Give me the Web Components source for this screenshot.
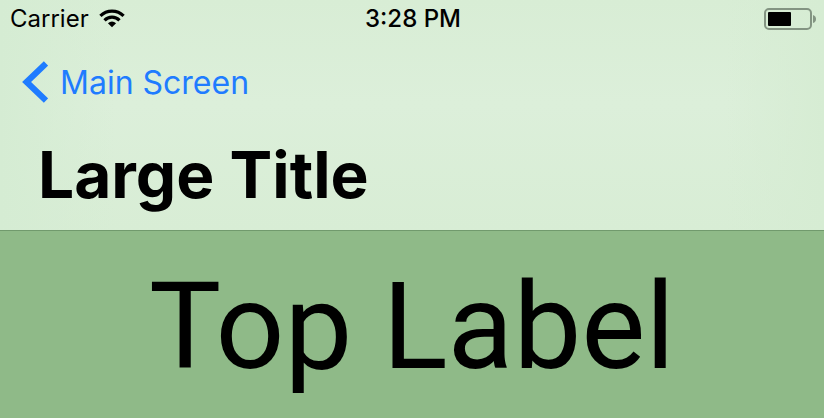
<!DOCTYPE html>
<html lang="en">
<head>
<meta charset="utf-8">
<meta name="viewport" content="width=device-width, initial-scale=1">
<title>Large Title</title>
<style>
  body {
    margin: 0;
    min-height: 100vh;
    display: flex;
    flex-direction: column;
    background: #8fba88;
    color: #000;
    font-family: Inter, "Liberation Sans", sans-serif;
  }
</style>
</head>
<body>
  <large-title-bar>
    <status-bar slot="status" level="50">
      <span slot="carrier">Carrier</span>
      <time slot="time" datetime="15:28">3:28 PM</time>
    </status-bar>
    <back-link slot="back" href="#main">Main Screen</back-link>
    Large Title
  </large-title-bar>
  <top-label>Top Label</top-label>

<script>
/**
 * Creates the open shadow root of a component
 * @param {HTMLElement} element
 * @param {string} html
 * @returns {ShadowRoot}
 */
function attachTemplate(element, html) {
  const root = element.attachShadow({ mode: "open" });
  root.innerHTML = html;
  return root;
}

customElements.define(
  "wifi-icon",
  class extends HTMLElement {
    constructor() {
      super();
      attachTemplate(this, /*html*/ `
        <style>
          :host { display: block; }
          svg { display: block; }
        </style>
        <svg width="26" height="20" viewBox="0 0 26 20" aria-hidden="true">
          <g fill="none" stroke="currentColor" stroke-width="3.2">
            <path d="M1.4 6.9A16.5 16.5 0 0 1 24.6 6.9"/>
            <path d="M5.5 11.3A10.6 10.6 0 0 1 20.5 11.3"/>
          </g>
          <path fill="currentColor" d="M13 18.2L8.9 14.2Q13 10.8 17.1 14.2Z"/>
        </svg>
      `);
    }
  }
);

customElements.define(
  "battery-icon",
  class extends HTMLElement {
    static observedAttributes = ["level"];

    constructor() {
      super();
      this.root = attachTemplate(this, /*html*/ `
        <style>
          :host { display: block; }
          svg { display: block; }
        </style>
        <svg width="52" height="22" viewBox="0 0 52 22" aria-hidden="true">
          <rect x="1" y="1" width="46" height="20" rx="4" fill="none" stroke="#839482" stroke-width="2"/>
          <path fill="#839482" d="M49 7Q52 8 52 11Q52 14 49 15Z"/>
          <rect id="charge" x="4" y="4" width="0" height="14" rx="1"/>
        </svg>
      `);
    }

    attributeChangedCallback(name, oldValue, value) {
      // The tank is 46 units wide inside the outline
      this.root.querySelector("#charge").setAttribute("width", Math.round((46 * Number(value)) / 100));
    }
  }
);

customElements.define(
  "status-bar",
  class extends HTMLElement {
    constructor() {
      super();
      this.root = attachTemplate(this, /*html*/ `
        <style>
          :host {
            display: grid;
            grid-template-columns: 1fr auto 1fr;
            align-items: center;
            padding: 0 8px 0 10px;
            font-size: 24px;
            line-height: 38px;
          }
          .carrier {
            display: flex;
            align-items: center;
            gap: 10px;
          }
          .time { font-weight: 500; }
          battery-icon { justify-self: end; }
        </style>
        <div class="carrier"><slot name="carrier"></slot><wifi-icon></wifi-icon></div>
        <div class="time"><slot name="time"></slot></div>
        <battery-icon></battery-icon>
      `);
    }

    connectedCallback() {
      this.root.querySelector("battery-icon").setAttribute("level", this.getAttribute("level"));
    }
  }
);

customElements.define(
  "back-link",
  class extends HTMLElement {
    constructor() {
      super();
      this.root = attachTemplate(this, /*html*/ `
        <style>
          :host {
            display: flex;
            padding: 0 22px;
            font-size: 32px;
            line-height: 90px;
          }
          a {
            display: flex;
            align-items: center;
            gap: 12px;
            color: #1f7cff;
            text-decoration: none;
          }
          svg { display: block; }
        </style>
        <a>
          <svg width="26" height="44" viewBox="0 0 26 44" aria-hidden="true">
            <path d="M24 2.4L4.6 21L24 39.6" fill="none" stroke="currentColor" stroke-width="6.2"/>
          </svg>
          <slot></slot>
        </a>
      `);
    }

    connectedCallback() {
      this.root.querySelector("a").href = this.getAttribute("href");
    }
  }
);

customElements.define(
  "large-title-bar",
  class extends HTMLElement {
    constructor() {
      super();
      attachTemplate(this, /*html*/ `
        <style>
          :host {
            display: block;
            padding-bottom: 8px;
            border-bottom: 1px solid #719a6d;
            background:
              linear-gradient(to right, #d5ecd3, transparent 14%, transparent 88%, #d6ecd3),
              linear-gradient(#d8edd5, #dcefda 45%, #d8edd5);
          }
          h1 {
            margin: 0;
            padding: 0 38px;
            font-size: 64px;
            font-weight: 700;
            line-height: 94px;
          }
        </style>
        <slot name="status"></slot>
        <nav><slot name="back"></slot></nav>
        <h1><slot></slot></h1>
      `);
    }
  }
);

customElements.define(
  "top-label",
  class extends HTMLElement {
    constructor() {
      super();
      attachTemplate(this, /*html*/ `
        <style>
          :host {
            display: block;
            padding-top: 8px;
            font-family: Roboto, "Liberation Sans", sans-serif;
            font-size: 121px;
            line-height: 176px;
            text-align: center;
          }
          p { margin: 0; }
        </style>
        <p><slot></slot></p>
      `);
    }
  }
);
</script>
</body>
</html>
